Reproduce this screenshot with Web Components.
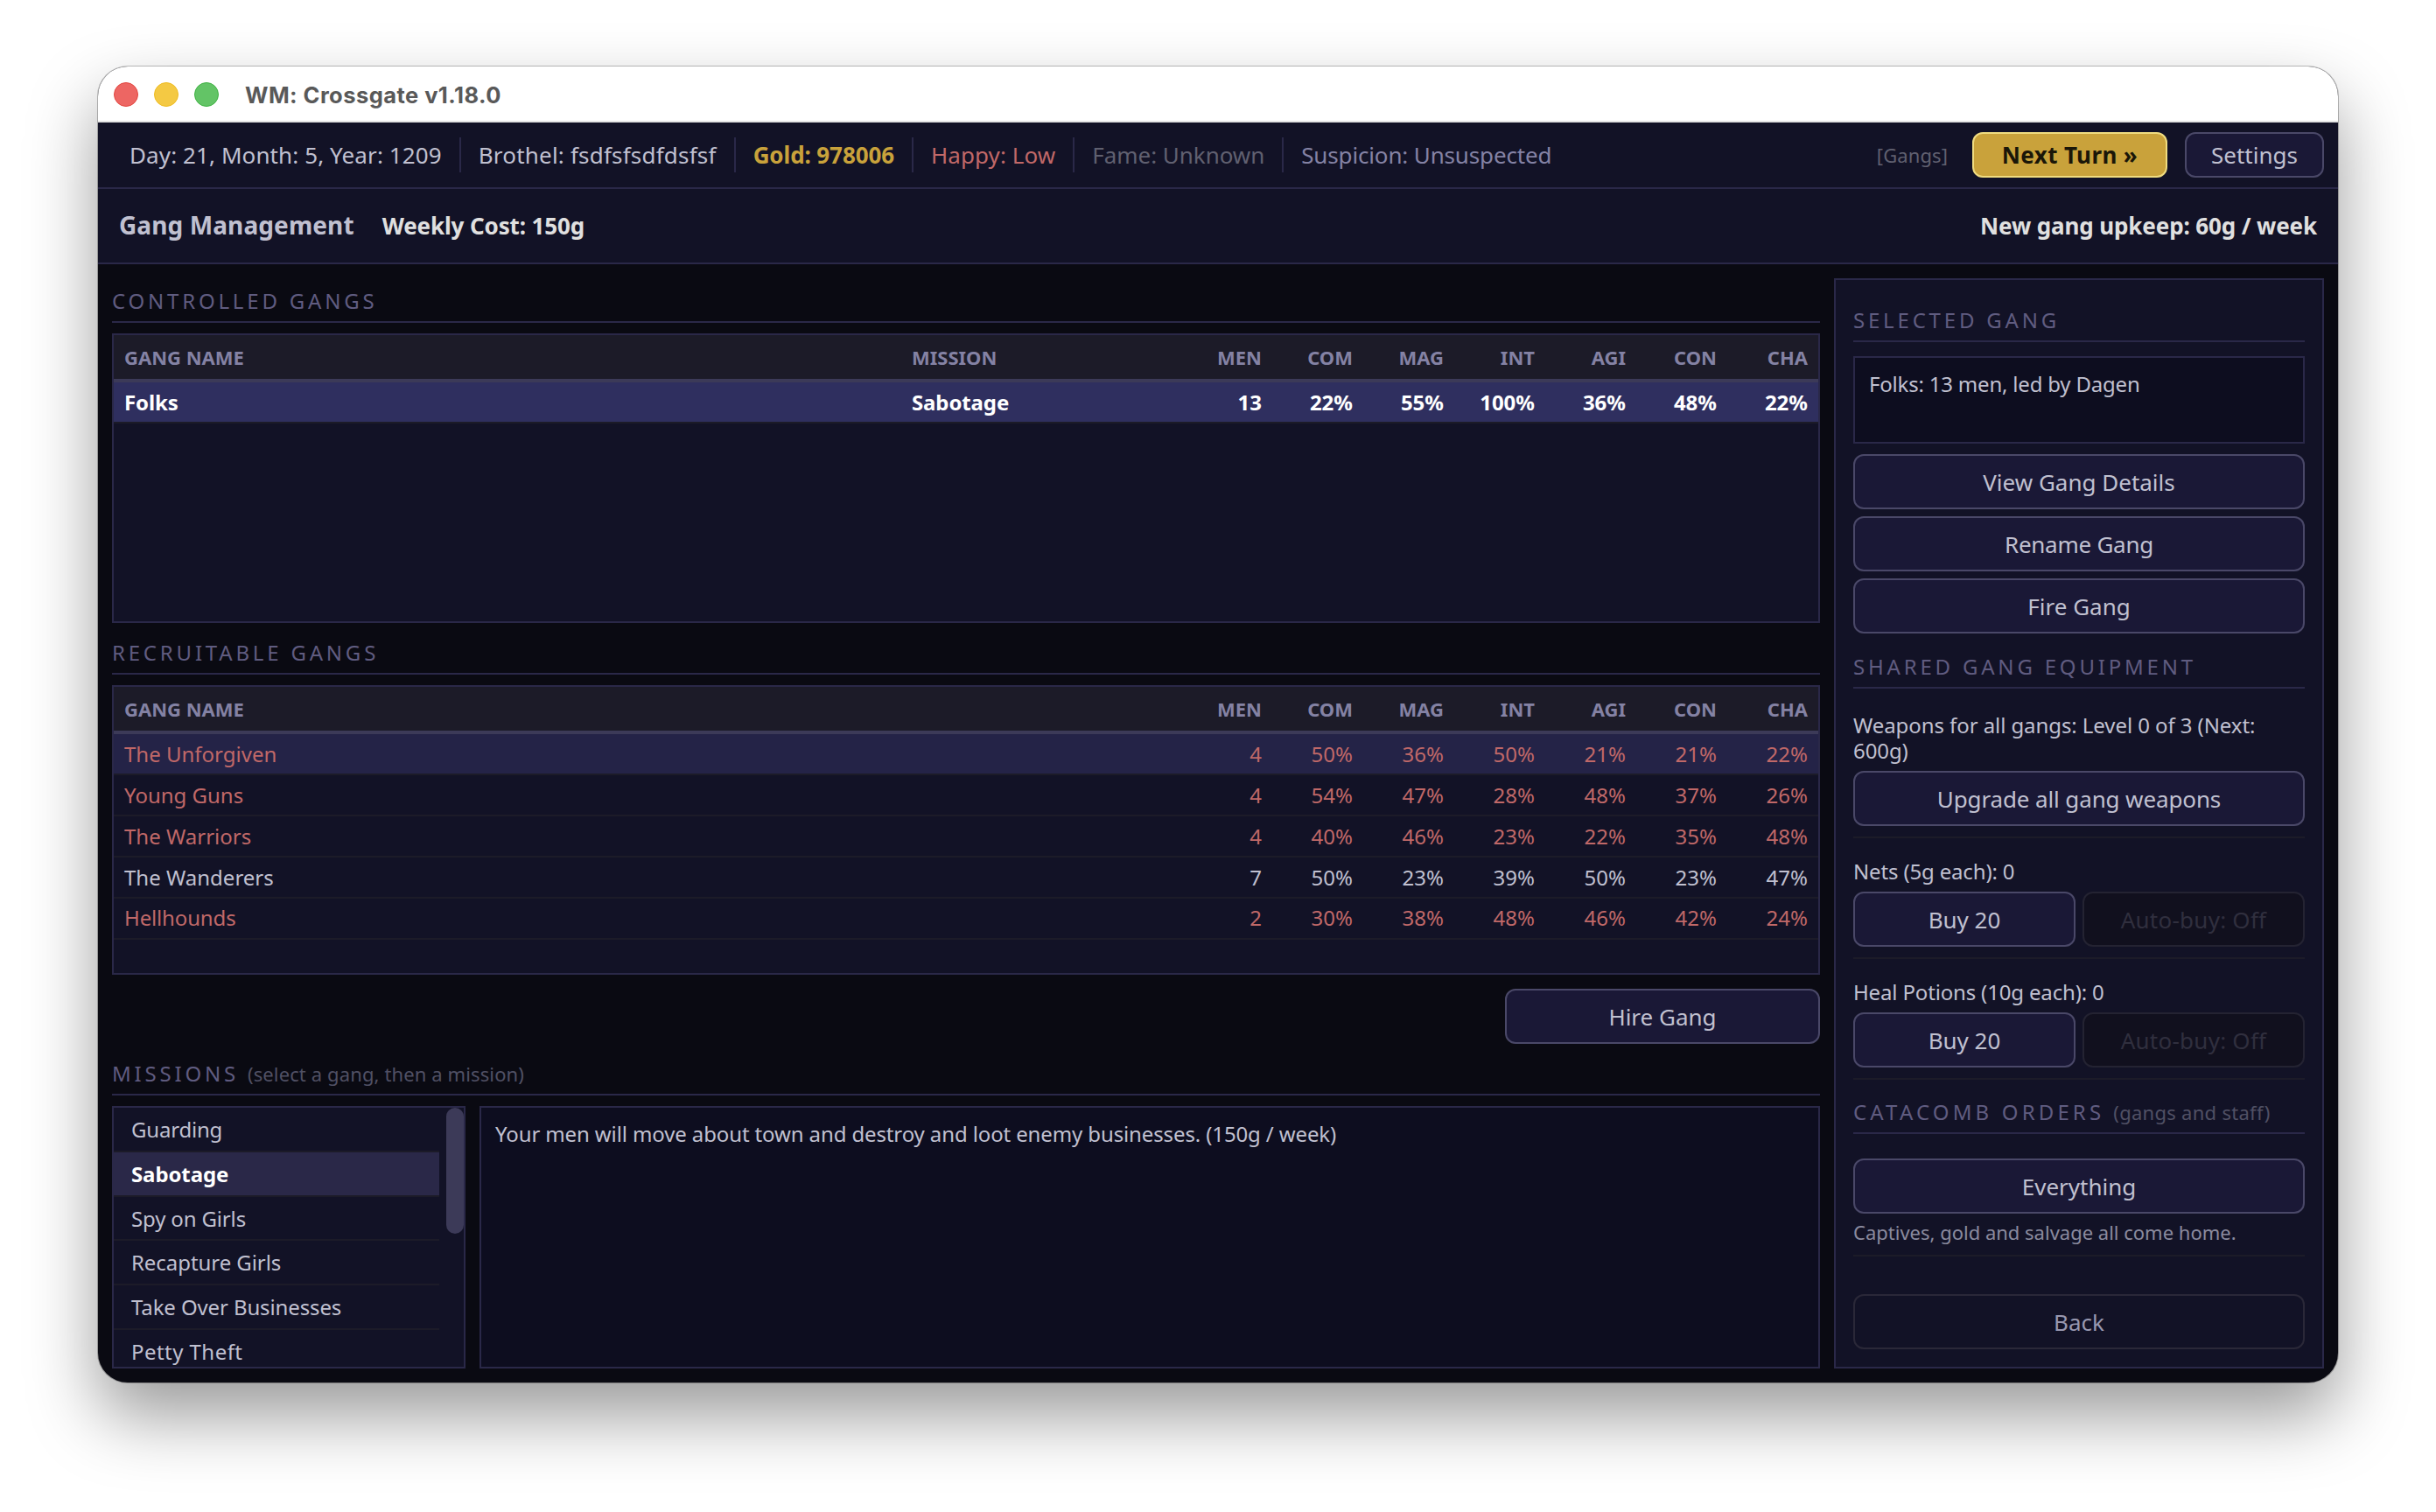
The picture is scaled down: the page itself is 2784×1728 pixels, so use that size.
<!DOCTYPE html>
<html lang="en">
<head>
<meta charset="utf-8">
<title>WM: Crossgate v1.18.0</title>
<style>
    :root{
        --bg: #0a0a12;
        --panel: #121226;
        --inset: #0d0d1f;
        --border: #2a2848;
        --line: #1c1b28;
        --text: #c0c0d0;
        --muted: #8482a4;
        --heading: #605c80;
        --red: #c06868;
        --gold: #c9a23b;
    }
    body{
        margin: 0;
        padding: 76px 112px 0;
        height: 1652px;
        overflow: hidden;
        background: #fff;
        color: var(--text);
        font-family: "Noto Sans", "Liberation Sans", sans-serif;
        font-size: 24px;
        line-height: 33px;
    }
</style>
</head>
<body>
<app-window heading="WM: Crossgate v1.18.0">
    <status-bar></status-bar>
    <page-header></page-header>
    <gang-screen></gang-screen>
</app-window>

<script>
const columns = ["MEN", "COM", "MAG", "INT", "AGI", "CON", "CHA"];

const controlled = [
    { name: "Folks", mission: "Sabotage", state: "selected", stats: ["13", "22%", "55%", "100%", "36%", "48%", "22%"] }
];

const recruitable = [
    { name: "The Unforgiven", state: "hover weak", stats: ["4", "50%", "36%", "50%", "21%", "21%", "22%"] },
    { name: "Young Guns", state: "weak", stats: ["4", "54%", "47%", "28%", "48%", "37%", "26%"] },
    { name: "The Warriors", state: "weak", stats: ["4", "40%", "46%", "23%", "22%", "35%", "48%"] },
    { name: "The Wanderers", state: "", stats: ["7", "50%", "23%", "39%", "50%", "23%", "47%"] },
    { name: "Hellhounds", state: "weak last", stats: ["2", "30%", "38%", "48%", "46%", "42%", "24%"] }
];

// name and letter-spacing of each entry
const missions = [
    ["Guarding", -.2],
    ["Sabotage", -.1],
    ["Spy on Girls", -.15],
    ["Recapture Girls", -.06],
    ["Take Over Businesses", -.12],
    ["Petty Theft", .45]
];

class AppWindow extends HTMLElement{
    constructor(){
        super();
        this.attachShadow({ mode: "open" });
    }

    connectedCallback(){
        this.shadowRoot.innerHTML = `
        <style>
            :host{
                display: flex;
                flex-direction: column;
                width: 2560px;
                height: 1504px;
                border-radius: 34px;
                overflow: hidden;
                background: var(--bg);
                box-shadow: 0 0 0 1px rgba(0, 0, 0, .25), 0 38px 80px rgba(0, 0, 0, .4);
            }
            header{
                box-sizing: border-box;
                height: 64px;
                flex: none;
                display: flex;
                align-items: center;
                gap: 18px;
                padding: 2px 18px 0;
                background: #fff;
                border-bottom: 2px solid #e4e4e4;
            }
            i{
                box-sizing: border-box;
                width: 28px;
                height: 28px;
                border-radius: 50%;
                border: 1px solid;
            }
            .close{ background: #ed6663; border-color: #e2463f; }
            .min{ background: #f4c943; border-color: #eebb20; }
            .max{ background: #63c466; border-color: #3fb243; }
            span{
                margin-left: 12px;
                color: #595959;
                font: 700 25.5px/33px Inter, "Liberation Sans", sans-serif;
                letter-spacing: .45px;
            }
        </style>
        <header>
            <i class="close"></i><i class="min"></i><i class="max"></i>
            <span>${this.getAttribute("heading")}</span>
        </header>
        <slot></slot>
        `;
    }
}
customElements.define("app-window", AppWindow);

class UiButton extends HTMLElement{
    constructor(){
        super();
        this.attachShadow({ mode: "open" });
    }

    connectedCallback(){
        this.shadowRoot.innerHTML = `
        <style>
            :host{
                box-sizing: border-box;
                display: flex;
                align-items: center;
                justify-content: center;
                height: 63px;
                padding-top: 2px;
                border: 2px solid #4a4868;
                border-radius: 12px;
                background: #1a1836;
                color: var(--text);
                font-size: 26px;
                white-space: nowrap;
            }
            :host([kind="primary"]){
                background: var(--gold);
                border-color: #f0dc80;
                color: #1a1608;
                font-weight: 700;
            }
            :host([kind="plain"]){
                background: none;
                border-color: #2a2838;
                color: #9898b0;
            }
            :host([disabled]){
                background: #11101e;
                border-color: #242332;
                color: #302f3e;
                letter-spacing: .25px;
            }
        </style>
        <slot></slot>
        `;
    }
}
customElements.define("ui-button", UiButton);

class StatusBar extends HTMLElement{
    constructor(){
        super();
        this.attachShadow({ mode: "open" });
    }

    connectedCallback(){
        this.shadowRoot.innerHTML = `
        <style>
            :host{
                box-sizing: border-box;
                height: 76px;
                flex: none;
                display: flex;
                align-items: center;
                padding: 0 16px;
                background: var(--panel);
                border-bottom: 2px solid var(--border);
                font-size: 26px;
                white-space: nowrap;
            }
            span{
                padding: 0 20px;
                line-height: 40px;
                border-right: 2px solid var(--border);
            }
            .date{ letter-spacing: .1px; }
            .place{ letter-spacing: .2px; }
            .gold{
                color: var(--gold);
                font-weight: 700;
                letter-spacing: -.1px;
            }
            .happy{ color: var(--red); letter-spacing: .08px; }
            .fame{ color: #606070; letter-spacing: -.05px; }
            .suspicion{
                color: var(--muted);
                border: 0;
                letter-spacing: -.15px;
            }
            .screen{
                margin-left: auto;
                padding: 0 28px 0 0;
                border: 0;
                color: #606070;
                font-size: 22px;
                letter-spacing: .1px;
            }
            ui-button{
                height: 52px;
                padding-top: 0;
            }
            .next{
                width: 216px;
                margin-right: 20px;
                letter-spacing: .4px;
            }
            .settings{ width: 154px; }
            .next{ width: 223px; }
            .settings{ width: 159px; }
        </style>
        <span class="date">Day: 21, Month: 5, Year: 1209</span>
        <span class="place">Brothel: fsdfsfsdfdsfsf</span>
        <span class="gold">Gold: 978006</span>
        <span class="happy">Happy: Low</span>
        <span class="fame">Fame: Unknown</span>
        <span class="suspicion">Suspicion: Unsuspected</span>
        <span class="screen">[Gangs]</span>
        <ui-button class="next" kind="primary">Next Turn »</ui-button>
        <ui-button class="settings">Settings</ui-button>
        `;
    }
}
customElements.define("status-bar", StatusBar);

class PageHeader extends HTMLElement{
    constructor(){
        super();
        this.attachShadow({ mode: "open" });
    }

    connectedCallback(){
        this.shadowRoot.innerHTML = `
        <style>
            :host{
                box-sizing: border-box;
                height: 86px;
                flex: none;
                display: flex;
                align-items: baseline;
                gap: 32px;
                padding: 23px 24px 0;
                background: var(--panel);
                border-bottom: 2px solid var(--border);
                color: #e0e0e0;
                font-size: 26px;
                font-weight: 700;
                line-height: 36px;
                letter-spacing: -.12px;
            }
            h1{
                margin: 0;
                color: var(--text);
                font-size: 28px;
                letter-spacing: .1px;
            }
            .upkeep{ margin-left: auto; }
        </style>
        <h1>Gang Management</h1>
        <span>Weekly Cost: 150g</span>
        <span class="upkeep">New gang upkeep: 60g / week</span>
        `;
    }
}
customElements.define("page-header", PageHeader);

class SectionHeading extends HTMLElement{
    constructor(){
        super();
        this.attachShadow({ mode: "open" });
    }

    connectedCallback(){
        const note = this.getAttribute("note");
        this.shadowRoot.innerHTML = `
        <style>
            :host{
                display: flex;
                align-items: baseline;
                gap: 10px;
                height: 33px;
                padding-bottom: 7px;
                border-bottom: 2px solid var(--border);
                color: var(--heading);
                letter-spacing: 3.8px;
            }
            small{
                color: #505064;
                font-size: 22px;
                letter-spacing: var(--note-spacing, .12px);
            }
        </style>
        <slot></slot>
        ${note ? `<small>${note}</small>` : ""}
        `;
    }
}
customElements.define("section-heading", SectionHeading);

class GangTable extends HTMLElement{
    constructor(){
        super();
        this.attachShadow({ mode: "open" });
    }

    set gangs(list){
        this.list = list;
        this.render();
    }

    render(){
        const rows = this.list.map(gang => `
            <div class="row ${gang.state}">
                <span>${gang.name}</span><span>${gang.mission || ""}</span>
                ${gang.stats.map(stat => `<b>${stat}</b>`).join("")}
            </div>
        `).join("");

        this.shadowRoot.innerHTML = `
        <style>
            :host{
                box-sizing: border-box;
                display: block;
                height: 331px;
                border: 2px solid var(--border);
                background: var(--panel);
            }
            .head, .row{
                box-sizing: border-box;
                display: grid;
                grid-template-columns: 1fr 320px repeat(7, 104px);
                align-items: center;
            }
            .head{
                height: 54px;
                background: #1c1b28;
                border-bottom: 4px solid #3c3a58;
                color: var(--muted);
                font-size: 22px;
                font-weight: 700;
            }
            .row{
                height: 47px;
                border-bottom: 2px solid var(--line);
            }
            span, b{
                padding: 0 12px;
                font-weight: inherit;
            }
            b{ text-align: right; }
            .weak{ color: var(--red); }
            .hover{ background: #242347; }
            .last{ padding-bottom: 2px; }
            .last span{ letter-spacing: -.15px; }
            .selected{
                background: #2f2f5f;
                color: #fff;
                font-weight: 700;
            }
            .selected span{ letter-spacing: -.12px; }
        </style>
        <div class="head">
            <span>GANG NAME</span><span>${this.hasAttribute("missions") ? "MISSION" : ""}</span>
            ${columns.map(name => `<b>${name}</b>`).join("")}
        </div>
        ${rows}
        `;
    }
}
customElements.define("gang-table", GangTable);

class TextBox extends HTMLElement{
    constructor(){
        super();
        this.attachShadow({ mode: "open" });
    }

    connectedCallback(){
        this.shadowRoot.innerHTML = `
        <style>
            :host{
                box-sizing: border-box;
                display: block;
                padding: 13px 16px;
                border: 2px solid var(--border);
                background: var(--inset);
                letter-spacing: -.12px;
            }
        </style>
        <slot></slot>
        `;
    }
}
customElements.define("text-box", TextBox);

class MissionList extends HTMLElement{
    constructor(){
        super();
        this.attachShadow({ mode: "open" });
    }

    connectedCallback(){
        const items = missions.map(([name, spacing]) => `
            <div${name === "Sabotage" ? ' class="active"' : ""} style="letter-spacing: ${spacing}px">${name}</div>
        `).join("");

        this.shadowRoot.innerHTML = `
        <style>
            :host{
                box-sizing: border-box;
                display: flex;
                justify-content: space-between;
                width: 404px;
                height: 300px;
                overflow: hidden;
                border: 2px solid var(--border);
                background: var(--panel);
            }
            .items{ width: 372px; }
            .items div{
                box-sizing: border-box;
                height: 50.75px;
                padding: 8px 20px;
                border-bottom: 2px solid var(--line);
            }
            .items .active{
                background: #2a2848;
                color: #fff;
                font-weight: 700;
            }
            .thumb{
                width: 20px;
                height: 144px;
                border-radius: 10px;
                background: #3c3a58;
            }
        </style>
        <div class="items">${items}</div>
        <div class="thumb"></div>
        `;
    }
}
customElements.define("mission-list", MissionList);

class GangSidebar extends HTMLElement{
    constructor(){
        super();
        this.attachShadow({ mode: "open" });
    }

    connectedCallback(){
        this.shadowRoot.innerHTML = `
        <style>
            :host{
                box-sizing: border-box;
                width: 560px;
                flex: none;
                display: flex;
                flex-direction: column;
                padding: 29px 20px 20px;
                border: 2px solid var(--border);
                background: var(--panel);
            }
            text-box{
                height: 100px;
                margin: 16px 0 12px;
                letter-spacing: -.2px;
            }
            .stack{
                display: grid;
                gap: 8px;
                margin-bottom: 21px;
            }
            .rename{ letter-spacing: -.25px; }
            .upgrade{ letter-spacing: -.12px; }
            .group{
                padding: 21px 0 12px;
                border-bottom: 2px solid var(--line);
            }
            .weapons{ padding-top: 27px; }
            .orders{ padding: 28px 0 11px; }
            p{
                margin: 0 0 7px;
                letter-spacing: -.16px;
            }
            .weapons p{
                margin-bottom: 9px;
                line-height: 29px;
                letter-spacing: -.08px;
            }
            .orders p{
                margin: 6px 0 0;
                color: #8a8a9e;
                font-size: 22px;
                line-height: 30px;
                letter-spacing: 0;
            }
            .pair{
                display: grid;
                grid-template-columns: 1fr 1fr;
                gap: 8px;
            }
            .catacomb{
                --note-spacing: .28px;
                margin-top: 20px;
                letter-spacing: 4.15px;
            }
            .back{ margin-top: auto; }
        </style>
        <section-heading>SELECTED GANG</section-heading>
        <text-box>Folks: 13 men, led by Dagen</text-box>
        <div class="stack">
            <ui-button>View Gang Details</ui-button>
            <ui-button class="rename">Rename Gang</ui-button>
            <ui-button>Fire Gang</ui-button>
        </div>

        <section-heading>SHARED GANG EQUIPMENT</section-heading>
        <div class="group weapons">
            <p>Weapons for all gangs: Level 0 of 3 (Next: 600g)</p>
            <ui-button class="upgrade">Upgrade all gang weapons</ui-button>
        </div>
        <div class="group">
            <p>Nets (5g each): 0</p>
            <div class="pair">
                <ui-button>Buy 20</ui-button>
                <ui-button disabled>Auto-buy: Off</ui-button>
            </div>
        </div>
        <div class="group">
            <p>Heal Potions (10g each): 0</p>
            <div class="pair">
                <ui-button>Buy 20</ui-button>
                <ui-button disabled>Auto-buy: Off</ui-button>
            </div>
        </div>

        <section-heading class="catacomb" note="(gangs and staff)">CATACOMB ORDERS</section-heading>
        <div class="group orders">
            <ui-button>Everything</ui-button>
            <p>Captives, gold and salvage all come home.</p>
        </div>
        <ui-button class="back" kind="plain">Back</ui-button>
        `;
    }
}
customElements.define("gang-sidebar", GangSidebar);

class GangScreen extends HTMLElement{
    constructor(){
        super();
        this.attachShadow({ mode: "open" });
    }

    connectedCallback(){
        this.render();
        this.shadowRoot.getElementById("controlled").gangs = controlled;
        this.shadowRoot.getElementById("recruitable").gangs = recruitable;
    }

    render(){
        this.shadowRoot.innerHTML = `
        <style>
            :host{
                flex: 1;
                display: flex;
                gap: 16px;
                padding: 16px;
            }
            main{
                flex: 1;
                display: flex;
                flex-direction: column;
                padding-top: 9px;
            }
            section-heading{ margin-bottom: 12px; }
            gang-table + section-heading, .hire + section-heading{ margin-top: 17px; }
            .hire{
                align-self: flex-end;
                width: 360px;
                margin-top: 16px;
            }
            .missions{
                display: flex;
                gap: 16px;
            }
            text-box{ flex: 1; }
        </style>
        <main>
            <section-heading>CONTROLLED GANGS</section-heading>
            <gang-table id="controlled" missions></gang-table>
            <section-heading>RECRUITABLE GANGS</section-heading>
            <gang-table id="recruitable"></gang-table>
            <ui-button class="hire">Hire Gang</ui-button>
            <section-heading note="(select a gang, then a mission)">MISSIONS</section-heading>
            <div class="missions">
                <mission-list></mission-list>
                <text-box>Your men will move about town and destroy and loot enemy businesses. (150g / week)</text-box>
            </div>
        </main>
        <gang-sidebar></gang-sidebar>
        `;
    }
}
customElements.define("gang-screen", GangScreen);
</script>
</body>
</html>
